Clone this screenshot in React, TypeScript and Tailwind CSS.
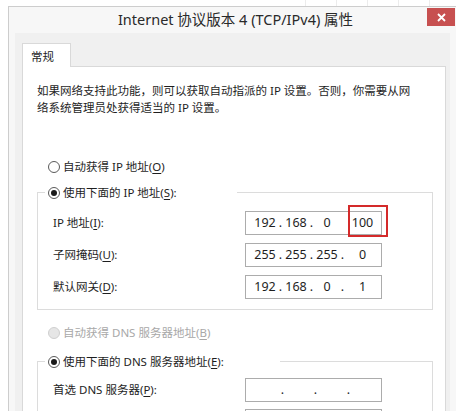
import React from "react";

const FONT = "font-['Noto_Sans','Noto_Sans_CJK_SC',sans-serif]";

function Radio({ checked, disabled }: { checked?: boolean; disabled?: boolean }) {
  return (
    <span
      className={
        "w-[12px] h-[12px] rounded-full border flex items-center justify-center shrink-0 " +
        (disabled ? "border-[#cfcfcf] bg-[#e6e6e6]" : "border-[#5a5a5a] bg-white")
      }
    >
      {checked && <span className="w-[6px] h-[6px] rounded-full bg-[#1a1a1a]" />}
    </span>
  );
}

function Acc({ k }: { k: string }) {
  return <span className="underline underline-offset-2">{k}</span>;
}

function IpBox({
  parts,
  wide,
  highlight,
  hideLastDot,
  noDots,
}: {
  parts: string[];
  wide?: boolean;
  highlight?: boolean;
  hideLastDot?: boolean;
  noDots?: boolean;
}) {
  const seg = wide ? "w-[30px]" : "w-[28px]";
  const dot = noDots ? "" : ".";
  return (
    <div className="relative w-[137px] h-[24px] border border-[#acacac] bg-white flex items-center pl-[5px] text-[12.5px] text-[#1e1e1e]">
      <span className={seg + " text-center"}>{parts[0]}</span>
      <span className="w-[3px] flex justify-center">{dot}</span>
      <span className={seg + " text-center"}>{parts[1]}</span>
      <span className="w-[3px] flex justify-center">{dot}</span>
      <span className={seg + " text-center"}>{parts[2]}</span>
      <span className="w-[3px] flex justify-center">{hideLastDot ? "" : dot}</span>
      <span className="flex-1 text-center">{parts[3]}</span>
      {highlight && (
        <div className="absolute -top-[7px] left-[102px] w-[40px] h-[32px] border-2 border-[#d42a2a]" />
      )}
    </div>
  );
}

function Row({ label, children }: { label: React.ReactNode; children: React.ReactNode }) {
  return (
    <div className="flex items-center h-[24px]">
      <div className="w-[192px] text-[11.5px] text-[#1e1e1e]">{label}</div>
      {children}
    </div>
  );
}

function GroupHeader({ width, children }: { width: string; children: React.ReactNode }) {
  return (
    <div className="flex h-[17px]">
      <div className="w-[8px] h-[9px] self-end border-l border-t border-[#dcdcdc]" />
      <div className={width + " flex items-center gap-[3px] pl-[3px] text-[11.5px] text-[#1e1e1e]"}>{children}</div>
      <div className="flex-1 h-[9px] self-end border-t border-r border-[#dcdcdc]" />
    </div>
  );
}

export default function App() {
  return (
    <div className={"w-[456px] h-[411px] overflow-hidden bg-white flex flex-col " + FONT}>
      <div className="h-[6px] flex pl-[305px] gap-[30px] shrink-0">
        <div className="w-px bg-[#ececec]" />
        <div className="w-px bg-[#ececec]" />
        <div className="w-px bg-[#ececec]" />
        <div className="w-px bg-[#ececec]" />
        <div className="w-px bg-[#ececec]" />
      </div>
      <div className="ml-[8px] flex-1 flex flex-col border-l border-t border-[#cdcdcd] bg-[#f7f7f7] min-h-0">
        <div className="relative h-[26px] shrink-0 flex items-center justify-center text-[14.5px] text-[#2a2a2a] pl-[6px]">
          Internet 协议版本 4 (TCP/IPv4) 属性
          <div className="absolute right-[1px] top-[1px] w-[28px] h-[18px] bg-[#c75050] flex items-center justify-center">
            <svg width="9" height="9" viewBox="0 0 9 9">
              <path d="M1 1 L8 8 M8 1 L1 8" stroke="white" strokeWidth="1.8" />
            </svg>
          </div>
        </div>
        <div className="flex-1 ml-[6px] mr-[6px] bg-[#f0f0f0] pt-[10px] pl-[7px] pr-[4px] flex flex-col min-h-0">
          <div className="w-[49px] h-[24px] shrink-0 border-t border-l border-r border-[#d9d9d9] bg-white -mb-px relative z-10 text-[11.5px] text-[#1e1e1e] pl-[8px] pt-[4px]">
            常规
          </div>
          <div className="flex-1 bg-white border border-[#d9d9d9] pl-[14px] pr-[12px] pt-[15px] flex flex-col">
            <p className="text-[11.5px] leading-[17px] text-[#1e1e1e]">
              如果网络支持此功能，则可以获取自动指派的 IP 设置。否则，你需要从网
              <br />
              络系统管理员处获得适当的 IP 设置。
            </p>

            <div className="mt-[42px] h-[17px] flex items-center gap-[3px] pl-[11px] text-[11.5px] text-[#1e1e1e]">
              <Radio />
              <span>
                自动获得 IP 地址(<Acc k="O" />)
              </span>
            </div>

            <div className="mt-[9px]">
              <GroupHeader width="w-[192px]">
                <Radio checked />
                <span>
                  使用下面的 IP 地址(<Acc k="S" />):
                </span>
              </GroupHeader>
              <div className="border-l border-r border-b border-[#dcdcdc] pl-[15px] pt-[10px] pb-[10px] flex flex-col gap-[8px]">
                <Row
                  label={
                    <>
                      IP 地址(<Acc k="I" />):
                    </>
                  }
                >
                  <IpBox parts={["192", "168", "0", "100"]} highlight hideLastDot />
                </Row>
                <Row
                  label={
                    <>
                      子网掩码(<Acc k="U" />):
                    </>
                  }
                >
                  <IpBox parts={["255", "255", "255", "0"]} />
                </Row>
                <Row
                  label={
                    <>
                      默认网关(<Acc k="D" />):
                    </>
                  }
                >
                  <IpBox parts={["192", "168", "0", "1"]} />
                </Row>
              </div>
            </div>

            <div className="mt-[14px] h-[17px] flex items-center gap-[3px] pl-[11px] text-[11.5px] text-[#a8a8a8]">
              <Radio disabled />
              <span>
                自动获得 DNS 服务器地址(<Acc k="B" />)
              </span>
            </div>

            <div className="mt-[12px]">
              <GroupHeader width="w-[235px]">
                <Radio checked />
                <span>
                  使用下面的 DNS 服务器地址(<Acc k="E" />):
                </span>
              </GroupHeader>
              <div className="border-l border-r border-b border-[#dcdcdc] pl-[15px] pt-[8px] pb-[10px] flex flex-col gap-[7px]">
                <Row
                  label={
                    <>
                      首选 DNS 服务器(<Acc k="P" />):
                    </>
                  }
                >
                  <IpBox parts={["", "", "", ""]} wide />
                </Row>
                <Row label="">
                  <IpBox parts={["", "", "", ""]} wide noDots />
                </Row>
              </div>
            </div>
          </div>
        </div>
      </div>
    </div>
  );
}
